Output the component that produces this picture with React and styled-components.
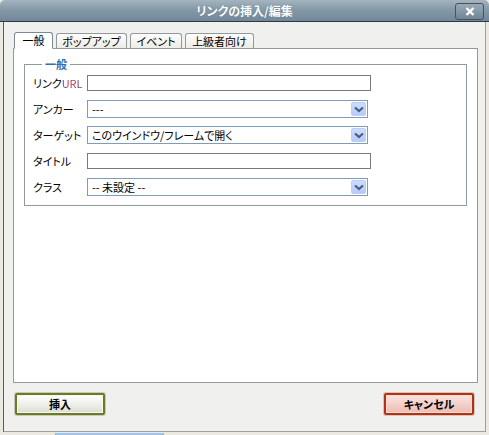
import React from "react";
import styled, { createGlobalStyle } from "styled-components";

const Global = createGlobalStyle`
  html, body { margin: 0; padding: 0; background: #ece9e1; }
  body {
    width: 489px; height: 435px; overflow: hidden;
    font-family: "Noto Sans CJK JP", "Noto Sans", sans-serif;
    font-size: 11px; color: #000;
    font-feature-settings: "palt";
  }
`;

const Page = styled.div`
  display: flex; flex-direction: column; width: 489px; height: 435px;
`;

const TitleBar = styled.div`
  position: relative;
  height: 21px; flex: none;
  border-bottom: 1px solid #2e3a42;
  border-radius: 5px 5px 0 0;
  background: linear-gradient(#a5b5c0, #8599a7 45%, #71879a);
  display: flex; align-items: center; justify-content: center;
  color: #fff; font-weight: bold; font-size: 12px;
  text-shadow: 0 0 1px #55687a;
`;

const CloseButton = styled.div`
  position: absolute; right: 5px; top: 3px;
  width: 27px; height: 15px;
  border: 1px solid #46525c; border-radius: 3px;
  background: linear-gradient(#9aabb7, #6f8494);
  display: flex; align-items: center; justify-content: center;
`;

const Body = styled.div`
  margin-left: 3px; width: 483px; height: 410px; flex: none;
  box-sizing: border-box;
  border-left: 1px solid #5a5a5a; border-right: 1px solid #a39d92;
  border-bottom: 1px solid #a0a0a0;
  background: #f0f0ee;
  padding: 9px 0 0 9px;
  display: flex; flex-direction: column;
`;

const Tabs = styled.div`
  display: flex; align-items: flex-end; gap: 3px; padding-left: 1px; height: 17px;
  position: relative; z-index: 1;
`;

const Tab = styled.div`
  width: ${p => p.$w}px;
  height: ${p => (p.$active ? 17 : 15)}px;
  box-sizing: border-box; white-space: nowrap;
  border: 1px solid ${p => (p.$active ? "#7d8891" : "#919b9c")};
  border-bottom: ${p => (p.$active ? "1px solid #fff" : "none")};
  border-radius: 3px 3px 0 0;
  background: ${p => (p.$active ? "#fff" : "linear-gradient(#fefefe, #ecebe6)")};
  display: flex; align-items: center; justify-content: center;
  line-height: 1;
  margin-bottom: ${p => (p.$active ? -1 : 0)}px;
`;

const Panel = styled.div`
  width: 465px; height: 335px; box-sizing: border-box;
  border: 1px solid #919b9c; background: #fff;
  padding: 9px 10px 0 10px;
`;

const Fieldset = styled.fieldset`
  margin: 0; padding: 4px 0 9px 8px;
  border: 1px solid #919b9c;
  width: 443px; box-sizing: border-box;
  display: flex; flex-direction: column; gap: 8px;
`;

const Legend = styled.legend`
  color: #2c6fb4; font-weight: bold; padding: 0 3px; margin-left: 9px;
  font-size: 11px; line-height: 12px;
`;

const Row = styled.div`
  display: flex; align-items: center; height: 18px; flex: none;
`;

const Label = styled.div`
  width: 54px; flex: none; line-height: 1;
`;

const Url = styled.span`
  background: linear-gradient(90deg, #7c3b8a, #c2393d 50%, #3b4aa8);
  -webkit-background-clip: text; background-clip: text; color: transparent;
`;

const TextInput = styled.div`
  width: 284px; height: 16px; box-sizing: border-box;
  border: 1px solid #7a7a7a; background: #fff;
`;

const Select = styled.div`
  width: 281px; height: 18px; box-sizing: border-box;
  border: 1px solid #7f9db9; background: #fff;
  display: flex; align-items: center; justify-content: space-between;
  padding-left: 4px; line-height: 1;
`;

const Arrow = styled.div`
  width: 15px; height: 14px; margin-right: 1px;
  border-radius: 2px;
  background: linear-gradient(#cddcfd, #b6cbf7);
  border: 1px solid #bccef5; box-sizing: border-box;
  display: flex; align-items: center; justify-content: center;
`;

const Spacer = styled.div` flex: 1; `;

const Footer = styled.div`
  display: flex; justify-content: space-between;
  padding: 0 11px 16px 2px;
`;

const Button = styled.div`
  width: 90px; height: 22px; box-sizing: border-box;
  border: 2px solid ${p => p.$border};
  border-radius: 2px;
  box-shadow: 0 0 0 1px ${p => p.$outer}, inset 0 0 0 1px ${p => p.$inner};
  background: ${p => p.$bg};
  display: flex; align-items: center; justify-content: center;
  font-weight: bold; font-size: 11px; line-height: 1;
`;

const Taskbar = styled.div`
  display: flex; height: 3px; margin-left: 55px; margin-top: 1px;
`;

const TaskItem = styled.div`
  width: 107px; height: 3px; border-left: 1px solid #b0b0b0; border-right: 1px solid #b0b0b0;
  background: #9cc4ee;
`;

const Chevron = () => (
  <svg width="10" height="7" viewBox="0 0 10 7">
    <path d="M1 1.5 L5 5 L9 1.5" fill="none" stroke="#4a5d80" strokeWidth="2.2" />
  </svg>
);

export default function App() {
  return (
    <>
      <Global />
      <Page>
        <TitleBar>
          リンクの挿入/編集
          <CloseButton>
            <svg width="10" height="9" viewBox="0 0 10 9">
              <path d="M1.5 1 L8.5 8 M8.5 1 L1.5 8" stroke="#fff" strokeWidth="2.4" />
            </svg>
          </CloseButton>
        </TitleBar>
        <Body>
          <Tabs>
            <Tab $active $w={39}>一般</Tab>
            <Tab $w={71}>ポップアップ</Tab>
            <Tab $w={52}>イベント</Tab>
            <Tab $w={69}>上級者向け</Tab>
          </Tabs>
          <Panel>
            <Fieldset>
              <Legend>一般</Legend>
              <Row>
                <Label>リンク<Url>URL</Url></Label>
                <TextInput />
              </Row>
              <Row>
                <Label>アンカー</Label>
                <Select>---<Arrow><Chevron /></Arrow></Select>
              </Row>
              <Row>
                <Label>ターゲット</Label>
                <Select>このウインドウ/フレームで開く<Arrow><Chevron /></Arrow></Select>
              </Row>
              <Row>
                <Label>タイトル</Label>
                <TextInput />
              </Row>
              <Row>
                <Label>クラス</Label>
                <Select>-- 未設定 --<Arrow><Chevron /></Arrow></Select>
              </Row>
            </Fieldset>
          </Panel>
          <Spacer />
          <Footer>
            <Button $border="#6c7a22" $outer="#c9c9c0" $inner="#f6f8ea" $bg="linear-gradient(#ffffff, #ecece6 60%, #dcdcd2)">挿入</Button>
            <Button $border="#b82f12" $outer="#c9c9c0" $inner="#f8dcd6" $bg="linear-gradient(#fbe3de, #f2cdc5 60%, #e9bdb4)">キャンセル</Button>
          </Footer>
        </Body>
        <Taskbar><TaskItem /></Taskbar>
      </Page>
    </>
  );
}
